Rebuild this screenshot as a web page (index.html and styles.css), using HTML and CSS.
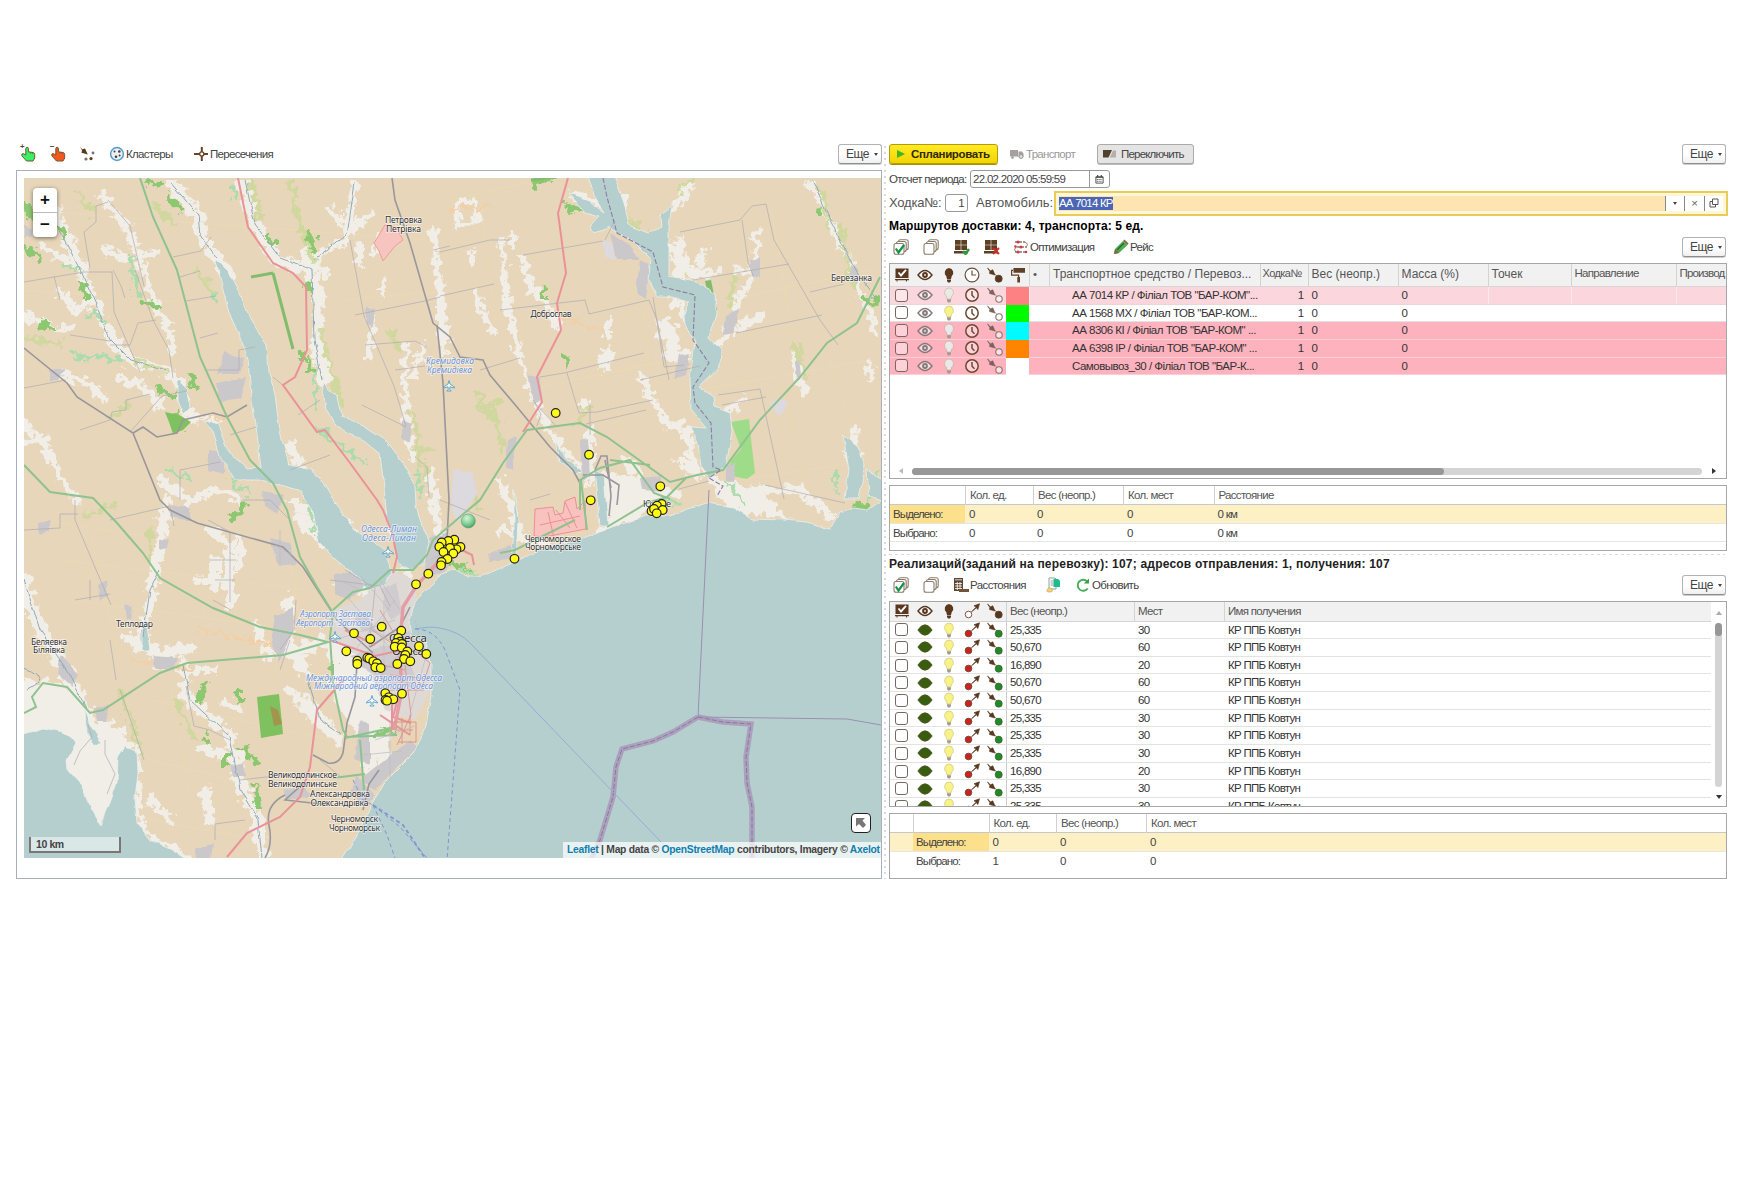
FILE: index.html
```html
<!DOCTYPE html>
<html lang="ru">
<head>
<meta charset="utf-8">
<title>Планирование маршрутов</title>
<link rel="stylesheet" href="styles.css">
</head>
<body>
<svg class="defs" width="0" height="0" aria-hidden="true">
  <symbol id="hand" viewBox="0 0 16 16"><path d="M5.800 8V2.600a1.300 1.300 0 0 1 2.600 0V5.800l4.600.7q1.700.4 1.700 2V12l-1.700 3H6.500L1.800 9.800Q1.300 7.400 3.300 7.600L5.800 9z" fill="currentColor" stroke="#6d5a30" stroke-width="1"/><path d="M10.300 6.200v1.500M12.300 6.600v1.500" stroke="#6d5a30" stroke-width=".7"/></symbol>
  <symbol id="plan-to" viewBox="0 0 16 16"><path d="M1 .5l2.200 2.700L6 2.500 8.800 8.500 2.500 6.800 3 4.200z" fill="#5b3a1c"/><circle cx="7" cy="13" r="1.600" fill="#7c6f64"/><circle cx="14" cy="7" r="1.400" fill="#7c6f64"/><circle cx="12" cy="12.600" r="1.600" fill="#5b3a1c"/></symbol>
  <symbol id="cluster" viewBox="0 0 16 16"><circle cx="8" cy="8" r="6.400" fill="#e4f1fa" stroke="#5c9ac6" stroke-width="1.500"/><g fill="#5b3a1c"><circle cx="5.500" cy="5.500" r="1"/><circle cx="10.300" cy="5.500" r="1.300"/><circle cx="10.600" cy="9.500" r="1"/><circle cx="7" cy="10.800" r="1.300"/></g></symbol>
  <symbol id="cross" viewBox="0 0 16 16"><path d="M1 8h14M8.800 1v14" stroke="#6a4424" stroke-width="2"/><circle cx="8.800" cy="8" r="2.100" fill="#fff" stroke="#6a4424" stroke-width="1.300"/></symbol>
  <symbol id="pages" viewBox="0 0 16 16"><g fill="#fff" stroke="#8c7b6a" stroke-width="1.100"><rect x="5.500" y=".8" width="9.700" height="10" rx="2"/><rect x="3.500" y="2.500" width="9.700" height="10" rx="2"/><rect x="1" y="4.500" width="10" height="10.700" rx="2"/></g></symbol>
  <symbol id="pages-on" viewBox="0 0 16 16"><use href="#pages"/><path d="M2.800 9.500l2.700 4L11 6" fill="none" stroke="#159447" stroke-width="2.200"/></symbol>
  <symbol id="pallet" viewBox="0 0 16 16"><path d="M2 1h5.700v4.700H2zM8.300 1H14v4.700H8.300zM2 6.300h5.700V11H2zM8.300 6.300H14V11H8.300zM1 12h14v2.500H1z" fill="#5d3f25"/></symbol>
  <symbol id="optim" viewBox="0 0 16 16"><path d="M2 3h10M4 8h10M2 13h10" stroke="#8a7765" stroke-width="1.300" stroke-dasharray="3 1"/><path d="M12 3q4 2 1 5M3 8q-3 3 0 5" fill="none" stroke="#8a7765"/><g fill="#d03a4c"><circle cx="5" cy="3" r="1.600"/><circle cx="2.500" cy="7.500" r="1.300"/><circle cx="8" cy="8" r="1.500"/><circle cx="5" cy="13" r="1.500"/><circle cx="13" cy="13" r="1.300"/></g></symbol>
  <symbol id="pencil" viewBox="0 0 16 16"><path d="M1 15l1-5L10 2l4.500 4L6 14z" fill="#4cae50"/><path d="M10 2l1.500-1.500L15.500 4.500 14.500 6z" fill="#85684d"/><path d="M1 15l1-5 4 4z" fill="#8b6238"/><path d="M4 11l7-7" stroke="#246b32" stroke-width="1.300"/></symbol>
  <symbol id="h-check" viewBox="0 0 16 16"><path d="M1.500 1.500h13v9.500h-13zM1 12h14v1.200H1zM2.500 13h1v1.500h-1zM12 13h1v1.500h-1z" fill="#5a3820"/><path d="M4.500 5.500L7 8.500 12 2.800" stroke="#fff" fill="none" stroke-width="1.900"/></symbol>
  <symbol id="eye" viewBox="0 0 16 16"><path d="M1 8q7-9 14 0-7 9-14 0z" fill="#fff" fill-opacity=".5" stroke="currentColor" stroke-width="1.400"/><circle cx="8" cy="8" r="2.900" fill="currentColor"/><circle cx="8" cy="8" r=".9" fill="#eee"/></symbol>
  <symbol id="eye-full" viewBox="0 0 16 16"><path d="M.8 8q7.200-10.500 14.400 0-7.200 10.500-14.400 0z" fill="#32600f" stroke="#64491f" stroke-width=".8"/><circle cx="8" cy="8" r="1.300" fill="#5b4a18"/></symbol>
  <symbol id="bulb" viewBox="0 0 16 16"><path d="M8 1a4.600 4.600 0 0 1 2.600 8.300L10 12H6L5.400 9.300A4.600 4.600 0 0 1 8 1z" fill="currentColor" stroke="#8c8040" stroke-opacity=".4" stroke-width=".7"/><path d="M6 12.300h4v1.700l-1 1.500H7L6 14z" fill="#a39d90"/></symbol>
  <symbol id="bulb-dark" viewBox="0 0 16 16"><path d="M8 1a4.700 4.700 0 0 1 2.700 8.200L10 12H6L5.300 9.200A4.700 4.700 0 0 1 8 1zM6 12.400h4v1.500L9 15.500H7L6 13.900z" fill="#5a3820"/></symbol>
  <symbol id="clock" viewBox="0 0 16 16"><circle cx="8" cy="8" r="6.200" fill="#fff" fill-opacity=".4" stroke="#6e4a33" stroke-width="1.500"/><path d="M8 4V8.300l2.500 2.500" fill="none" stroke="#6e4a33" stroke-width="1.500"/></symbol>
  <symbol id="clock-h" viewBox="0 0 16 16"><circle cx="8" cy="8" r="6.900" fill="#fff" stroke="#6a4f3d" stroke-width="1.200"/><path d="M8 3.500V8h4" fill="none" stroke="#6a4f3d" stroke-width="1.200"/></symbol>
  <symbol id="arr-in" viewBox="0 0 16 16"><path d="M.5 1l3 2.800L5.800 2.800 8 8 2.500 6.500 2.800 4.500zM7.500 7l2.500 2" fill="#5a3820" stroke="#5a3820" stroke-width=".6"/><circle cx="11.700" cy="11.700" r="3.600" fill="currentColor" stroke="#58402e" stroke-width=".5"/></symbol>
  <symbol id="arr-in-o" viewBox="0 0 16 16"><path d="M.5 1l3 2.800L5.800 2.800 8 8 2.500 6.500 2.800 4.500zM7.500 7l2.500 2.500" fill="#77655c" stroke="#77655c" stroke-width=".6"/><circle cx="12" cy="12" r="3.200" fill="#fff" fill-opacity=".6" stroke="#87766c" stroke-width="1.100"/></symbol>
  <symbol id="arr-out" viewBox="0 0 16 16"><path d="M15.500.8L10 2.800l2.200 1.300-4.700 4.700 4.900-4L13.800 6.500z" fill="#5a3820" stroke="#5a3820" stroke-width=".7"/><circle cx="4.500" cy="11.500" r="3.300" fill="currentColor" stroke="#6b4634" stroke-width=".9"/></symbol>
  <symbol id="roller" viewBox="0 0 16 16"><path d="M3.500 1H15v4.700H3.500zM1 2.800h2.500V4H2.200v3.500h7V10H10v5.500H7.300V10H8V8.700H1z" fill="#5d4027"/></symbol>
  <symbol id="calc" viewBox="0 0 16 16"><path d="M1 1h9v13H1z" fill="#5f4631"/><path d="M2 2.800h7M2 6.500h7M2 9h7M2 11.500h7M4.300 5v8M7 5v8" stroke="#fff" stroke-width=".8"/><path d="M6 12h10v3H6z" fill="#6f543a"/></symbol>
  <symbol id="docs" viewBox="0 0 16 16"><path d="M4 1h6l1 1v10H4z" fill="#fff" stroke="#8fa39a"/><path d="M5.500 4h3M5.500 6h3M5.500 8h3" stroke="#888" stroke-width=".8"/><path d="M8.500 2H13l2 2V10H8.500z" fill="#1dbb8d"/><path d="M2 13q1-3 3.500-2 2 .2 2 2.500 0 1.500-2 1.500H3q-2-.5-1-2z" fill="#f2d276" stroke="#c2a35a" stroke-width=".6"/></symbol>
  <symbol id="reload" viewBox="0 0 16 16"><path d="M12.700 11.500A5.500 5.500 0 1 1 12 4.300" fill="none" stroke="#45ad58" stroke-width="1.900"/><path d="M14 1.500V6.500H8.800z" fill="#35a04a"/></symbol>
  <symbol id="truck" viewBox="0 0 16 16"><path d="M1 4h8v6.500H1zM9.500 5.500H13l1.500 2V11h-5z" fill="#a3a09d"/><circle cx="3.500" cy="11.500" r="1.300" fill="#999"/><circle cx="12" cy="10.500" r="2" fill="#ddd" stroke="#999"/></symbol>
  <symbol id="switch" viewBox="0 0 16 16"><path d="M1 4h9L6.500 11.500H1z" fill="#53402f"/><path d="M11 4.500h3v7H7.800z" fill="#b7afa7"/></symbol>
</svg>
<main class="app">
  <section class="left">
    <div class="bar">
      <div class="hand-box g"><svg class="i"><use href="#hand"/></svg><b>+</b></div>
      <div class="hand-box r"><svg class="i"><use href="#hand"/></svg><b>−</b></div>
      <svg class="i dots"><use href="#plan-to"/></svg>
      <svg class="i cl"><use href="#cluster"/></svg><span class="t t-clusters">Кластеры</span>
      <svg class="i cr"><use href="#cross"/></svg><span class="t t-cross">Пересечения</span>
      <button class="more">Еще<i></i></button>
    </div>
    <div class="map-frame">
      <div class="map">
        <svg class="canvas" viewBox="24 178 857 680" preserveAspectRatio="none">
          <defs>
            <filter id="rough" x="0" y="0" width="100%" height="100%" filterUnits="objectBoundingBox"><feTurbulence type="fractalNoise" baseFrequency=".12" numOctaves="3" seed="4"/><feDisplacementMap in="SourceGraphic" scale="17" xChannelSelector="R" yChannelSelector="G"/></filter>
            <filter id="wavy" x="0" y="0" width="100%" height="100%"><feTurbulence type="fractalNoise" baseFrequency=".08" numOctaves="2" seed="9"/><feDisplacementMap in="SourceGraphic" scale="5" xChannelSelector="R" yChannelSelector="G"/></filter>
            <radialGradient id="ball" cx=".4" cy=".3" r=".7"><stop offset="0" stop-color="#d3f6d6"/><stop offset=".6" stop-color="#84cf98"/><stop offset="1" stop-color="#4ba368"/></radialGradient>
            <path id="plane" d="M0-5.500L1-2 5.500 1v1L1 .8.700 3.500 2.200 5H-2.200L-.7 3.500-1 .8-5.500 2V1L-1-2z" fill="#fff" fill-opacity=".7" stroke="#52a3c8" stroke-width=".9"/>
          </defs>
          <rect x="24" y="178" width="857" height="680" fill="#e7d6ba"/>
          <g fill="none" stroke="#eddab2" stroke-width=".8" opacity=".8"><path d="M24 210l400 30M24 290l180 14M340 300l120-10M450 200l130-30M700 390l170-30M60 560l250 30M70 600l230 30M150 700l180 40M150 760l170 40M480 400l190-40M730 300l140-30M740 480l130-20M150 820l100 18M45 520l100 16"/><path d="M180 190l30 70M290 190l30 60M380 300l20 100M480 200l16 120M640 280l10 90M770 200l30 180M830 360l40 130M220 530l20 110M90 530l30 130M190 560l20 70M170 680l20 120M290 560l10 60M200 700l10 60M600 370l40 100M780 380l30 120" stroke="#ebdcae"/></g>
          <g filter="url(#rough)">
            <g fill="none" stroke="#f1eee8" stroke-linecap="round" stroke-linejoin="round" stroke-width="9">
              <path d="M50 200L67 237 83 277 97 307 110 337 130 360 167 370 182 387 187 415 215 420" stroke-width="10"/>
              <path d="M170 182L200 217 200 233 217 260 230 275M243 180L253 223 277 260 310 270 320 297 316 337 325 380" stroke-width="11"/>
              <path d="M355 182L350 215 347 237 313 260 325 275M330 210l16 14M370 215l-15 10M360 245v16M306 245v20M318 300v60" stroke-width="8"/>
              <path d="M103 195l5 12 20 18 4 22M135 240L140 263 152 297 170 330 173 352M105 250l20 10 30-8M60 290L75 312 88 300" stroke-width="7"/>
              <path d="M24 315l30 14 20-2M40 245L60 258 83 265M24 423L43 443 60 477 77 500M24 443l24-5M60 375l30 10 16 14M118 378l24 8 16 16 4 8" stroke-width="7"/>
              <path d="M407 345L404 375 407 423 413 457M425 345l-12 30M433 230L440 297 446 340M378 235v20M372 315v30l-6 12M383 280v14" stroke-width="6"/>
              <path d="M456 205l18-5 4 20-20 6zM512 238v6M472 252v10M440 285v40l5 30M475 290l8 22 10 20M502 240L507 303 520 357 537 403 553 437 580 470" stroke-width="6"/>
              <path d="M523 257L530 285 550 310 556 325M608 322v14M605 355v12M585 400v6M590 430v50M640 377L667 423 687 430 697 477M573 195l30 10M610 190l16 12" stroke-width="8"/>
              <path d="M810 180L827 217 850 263 867 307 878 335M757 230L753 277M735 270h18M700 265l4-16M753 277L738 300 730 323 718 345M762 315l-25 15M795 355L800 385 806 390M870 365v14M744 400l-20 12M855 430v20M675 275l40-3" stroke-width="7"/>
              <path d="M680 240v30M670 245l20 26M675 210l14-25M660 330l12-2v20M667 355h20M673 300l20 20M680 460l10 10M740 490h60l30 25M600 530l50-25M625 460l20 20 20 22" stroke-width="9"/>
              <path d="M167 500L163 530 153 583 143 637 160 663M183 663L187 697 230 737 240 783 257 817 263 858M210 530l20 14v60M200 580h30M215 560v30" stroke-width="10"/>
              <path d="M24 580L30 610 67 673 90 723 120 735M130 640l30 15 30-6M290 600l-6 40 20 30M300 520l40 30 20 16M300 650l20-8M300 700l30 30M350 700l30 20 4 40M370 730v40M340 580l50 20" stroke-width="13"/>
              <path d="M160 480l30 20 30-10 20 10M195 670h20M225 700l12 10M255 625l15 30M200 750l40 6M290 690l36 40 14 10M390 520l20 60M320 500l50 50M240 540v24M430 470l10 70M500 480l20 50M205 790l4 30M150 800l20 20M500 530l60 20M290 445l10 20" stroke-width="8"/>
              <path d="M137 750L139 800 140 825 155 842 190 858" stroke-width="6"/>
            </g>
            <g fill="#f1eee8"><path d="M24 680l36 3 30 30 40 28 10 30-30 60-20 8-40-80-56-14zM280 500h50l20 30-30-5zM325 640l80-30 20 80-60 60-30-50zM600 470l80 20-20 20-60 10zM700 470l60 20 30 30-60-8zM100 200l10-6 4 16zM600 350l12-2v18l-16 4zM655 322l16-4 6 20-18 4zM840 450l20 4-6 16z"/></g>
          </g>
          <g filter="url(#rough)" fill="none" stroke-linecap="round">
            <path d="M250 180l12 40M290 180l14 60M305 230l8 30M320 330l12 50 6 30M75 192l18 20M155 205l18 20M195 270l20 24M115 505l-30 10M150 530v30M135 360l30 12M425 480l-12-70M415 450l16 0M475 390l20 30 8 30M630 220l18 18M680 190l16-14M822 190l8 40M840 225l12 60M60 345l-36-8M130 405l-20 14M735 275l-4 30M795 345l10 30M590 405l-14 20M470 485l10 25M120 690l20 60M175 700l20 40M500 400l-20 10M335 380l6 24M390 330l10 20" stroke="#ccd89a" stroke-width="5" opacity=".85"/>
            <path d="M150 180l8 6M168 195l14 16M24 245l16 14M24 205l10 14M82 285l4 12M40 323l12 6M270 237l4 8M309 230l4 20M306 282l5 8M303 350v8M190 375l4 12M60 228l6 8M160 390l14 6M176 415l2 12M145 303l14 4M565 205l14 6M533 185l18-8M545 290v10M566 355v8M310 360v10M820 212v1M865 300l14 2M245 505l-14 14M205 685l-6 14M240 690v12M206 735l3 10M243 750l14 12M225 755v10M255 785l4 24M333 665v10M380 735l10-4M440 558l30 14M858 506l10 2M405 755l6-6" stroke="#8cc870" stroke-width="6"/>
            <path d="M70 355l50 4M130 255l8 40M320 430l20 16 24 16M416 475l4 20M235 185v14M215 295v8M315 370v40M230 480l20 14M170 470l20 10M660 500l20 4M880 470l-10 30M835 470v20M90 315l16 4M65 265l16 8M465 570l14 10M725 480l20 24M305 490l10 40" stroke="#acdcae" stroke-width="4"/>
            <path d="M200 630l70 14M130 660l60 8M450 210l40-4M560 320l40 10M410 700l4 50M400 690l12 30M422 660v40M200 420l30-6" stroke="#f1cfa7" stroke-width="3"/>
          </g>
          <path d="M251 277l22-4M273 273l20 76M531 180l26-3" stroke="#82bd6d" stroke-width="3" fill="none"/>
          <path d="M705 281l6-1 6 30-5 3z" fill="#82bd6d"/>
          <path d="M165 412l14 3 12 7-8 8-10 4-4-12zM257 697l22-3 4 40-22 4z" fill="#7fc15f"/>
          <path d="M731 422l18-3 2 20 4 34-8 6-20-4 4-14 10-12z" fill="#9fdc89"/><path d="M270 706l8 4 4 14-8 2z" fill="#a2964f"/>
          <g filter="url(#wavy)" fill="#cbc8cc">
            <path d="M330 610l30-10 30-30 25 10 0 40 20 20v40l-20 40-30-10-20-50-30-20z" fill="#dfd9d6"/>
            <path d="M350 655l40-10 20 14 8 30-30-6-24-14zM392 636l20-6 14 20-20 10zM352 612l16 2 8 20-14-4zM380 590l16-8 6 30-12 8z" fill="#d0cbce"/>
            <path d="M427 540l20-8 10 20-14 20-20 6zM335 574l20-4 12 14-18 16-14-6zM270 538l20 4 6 22-18 2zM262 492l22 4-6 18-14-8zM225 352l18 6-4 16-22 0zM216 384l30-6-6 20-20 4zM208 450l16 2v22l-16-4zM172 505l18 4v12l-20-4zM610 233l20 12 10 14-24 0zM640 260l10 4-4 34-10-6zM680 355l10-2-4 22-12 4zM527 375l12 2 4 22-10 4zM507 440l10-4-4 34-8-4zM750 260l10-2v20l-8-2zM725 315l14-6-6 24-10 2zM402 420l10 4-2 18-8-4zM365 307l10 2-2 18-6-2zM98 585l8-4 2 16-8 4zM125 605l8 2-2 14-4-2zM140 630l8-2v18l-6 0zM152 655l26 2-4 12-18 0zM60 655l18 20-6 12-14-12zM95 708l14-4-4 18-8 0zM230 765l14-2 2 14-12 0zM195 848l18-4-2 14h-14zM283 790l20-4 10 10-26 4zM355 775l20 20-10 12-14-12zM360 720l10 4v40l-16-6zM488 553l26-8-4 14-20 2zM580 440l8-2 2 40-8 2zM640 478l22-2v16l-20-2zM726 465l10-2-2 20-8-2zM850 265l8 4v14l-8-2zM795 362l4-2 2 16-4 2zM24 225l8 4v8h-8zM50 370l14-2-6 12-8 0zM38 522l12-2v12l-10 4zM159 540l10-2-2 10-8 2zM360 780l50-40 8 8-44 42zM275 615l18-6v24l-14 30-8-20z"/>
            <path d="M453 470l20 4 4 20-20 30-6-20zM770 405l10-8 8 8-10 10zM600 240l12 4 4 16-10-4z" fill="#dcd9df"/>
          </g>
          <path d="M385 225l12 3 6 12-8 6-12 15-4-10-5-8z" fill="#f7c5c0" stroke="#ef9c9b"/>
          <path d="M535 509l18-2 2 8 8-2 2-12 10-4 2 12 8-8 1 28-42 8-10-1z" fill="#f8c2bf" stroke="#ef8f90"/>
          <path d="M548 512l6 26M556 510l14 18M540 525l40-9M565 502l12 26" stroke="#ef8f90" fill="none"/>
          <g fill="#b5cfcf" stroke="#edf0ea" stroke-width=".8">
            <g filter="url(#wavy)">
            <path d="M217 260l12 12 11 20 10 27 17 26 2 27 6 23 5 37 9 33 23 5 15 19 12 21 16 20 30 20 6 22-6 13-16 5-14-15-20-16-16-17-6-30-14-22-37-10-27 0-15-25-7-23-9-14 14 7 10 27 20 17 13-1-5-43-5-30-3-36-10-27-10-23-7-27-5-20z"/>
            <path d="M322 382l15 15 4 18 24 12 20 13 17 22 13 23 1 20 6 20 8 18-6 20-12 8-14-8-6-22-5-23-3-30-4-34-17-14-26-13-11-17z"/>
            <path d="M588 176h26l10 27 5 22 20 8 13-5-1-13 11-12-3 24v50l27 5 19 11 1 20-7 24 12 13-1 17-21 20 15 10 1 10 15 6 2 17-6 37-16 11-9-11-3-24-7-16 15 1-15-18-1-33 5-34-12-23 6-17-12-6h-20l-9-17 3-20-20-20-13-7-8-6-15 6-5-6 9-10-14-4-16-20 15 5 21 15-10-16z"/>
            <path d="M178 380l8 8 4 20-6 6-6-14zM843 435l14 10 8 20-6 34h-14l4-30zM594 470l10 4 4 52h-8zM514 490l4 30-2 45h-6l4-30zM867 470l16 10v20l-14-4zM85 708l6 18 10 16-6 4-9-14zM556 440l10 20 16 10-6 4-16-12zM146 620l4 30h-8l0-20z"/>
            <path d="M885 498l-17 12-15-2-13 4-10 17-23-7-24-2-31-1-19-12-26-4-20 6-17 7-23 0-34 11-30 11-43 11-25 13-35 15h-10l-17-8-12 4-7 10-18 16-7 24 2 13 15 5 5 22v33l-5 30-12 27-18 18-13 13-7 12-10 20-8 17-9 16-14 22h554z"/>
            <path d="M20 735l23-7 20 4 14 11-10 17 1 10 12 13 10 24 10 18 10-22 7-20 1-26 7-10 12 6 1 20-3 24 2 26 13 17 23 10 18 12H20z"/>
            </g>
          </g>
          <g fill="none" stroke="#8fa9b7" stroke-width="1" filter="url(#wavy)"><path d="M60 230L80 270 97 307 110 340 130 360 165 370M170 182L198 215 200 235 217 258M245 180L255 225 280 258 312 270 314 340 322 380M355 182L347 235 313 260M183 665L190 700 230 737 240 790 258 820 262 858M24 580L40 630 70 675 88 710M24 668q20 6 14 14t-12 8M812 180L830 220 855 270 878 300M143 637L150 590 160 570M308 680L320 720 342 735"/></g>
          <g fill="none" stroke="#aeacb2" stroke-width=".7">
            <path d="M24 282l60-10 28 0 2 40 26 60M24 388l42-8M135 270l18 50 16 30 4 28M90 268l-6-36 12-10 0-16 12-4M108 200l22 26 14 60M80 430l30-10 2-8 14-2 0-10 24-6M130 432l32-36 25-5M173 257l28-6 10-14M180 277l20-6M186 301l30-5M110 345l20 0 8-22 18-3M70 335l40 6M113 270l8 16 4 12M60 300l-6-24"/>
            <path d="M350 240l14 76 30 70 12 40M355 315l70-14 15-4M365 345l50-4 12 6M395 370l30-4M415 457l12 10 2 30M273 377l12 10M320 400l-22 15M290 470l40-15M230 435l26-8M205 370l34 0 0-20 16-3M200 338l18-5M433 250l17-4M362 405l44 22M180 500v-30l40-8"/>
            <path d="M440 252l50-12M490 240l20 0M440 296l54-12M500 310l85-10 4 14 60-14 8 20 12 60M523 255l80-14M605 240l10-20M680 232l60-12 12-14 14-2 8 36 46 80 18 25M742 220l6 42 6 16M693 280l96-16M736 333l86-18M810 292l34-8M540 377l24-4 80-20M567 373l12 40 18-1 56-12M590 405l0 30M555 425l-20-22M646 410l-60 14M640 380l60-14M718 395l42-6 24 110M722 405l44-8M653 297l8 50 3 20 20-2M480 370l40-12M533 400l8 14-4 12M530 500l20-6M440 500l50 20M765 485l80 18M709 481l-30 8"/>
            <path d="M75 500l0 20 36 85M24 530l36-2 0-14 18 0M110 520l60-14 4 20M75 600l35-6M208 520l22 12v70M215 580h20M210 560h26M213 600l18 10M240 500l30 0 20 20M90 580l0 20M120 690l14 40 10 30M88 725l4 12-12 14-6 14M105 740l0 14 10 20-8 20M110 640l6 40M230 740l-20-10-16-4-8-40M240 780l70-8M215 840l0-16 30-4M296 600l-2 30-14 20M330 580l50 6 10 20M290 640l-10 30M320 760l20 16M345 570l30 18-6 60"/>
          </g>
          <g fill="none" stroke="#98979b" stroke-width="1.600">
            <path d="M392 178l3 22 15 43 23 80 17 14 10 20 23 3 7 15 27 32 33 40 23 23 7 13M437 325l6 58 6 117-2 40M24 348l43 35 10 14 56 36 27 67 10 10 27 13 86 24 20 20 34 53 36 33M133 433l10-6 14 10 20-4 6-13 30-7 14 4 20-12M357 663l-2 34-8 26-4 30q-4 12-15 10l-15-8M330 805l-45-5 20-18M285 795q-20 10-16 30t-4 33M595 470l6-14 6 0 4 40-2 20M605 460l6 28M583 475h20l16 10-2 20M410 607l-10 20-30 20M363 810l6-26 10-14"/>
          </g>
          <g fill="none" stroke="#8ec28f" stroke-width="2">
            <path d="M140 178l13 39 24 53 23 87 27 60 23 43 23 23 14 27 13 47 17 30 16 26-3 24 3 46 10 47 4 7 50-2M24 465l26 27 43 6 24 25 26 30 17 25 53 30 47 19 40 8 28 7-45 13-96 8-27 10-57 37-13 3-23-26-24-4-11 14 4 10-12 6M333 610l20-18 17-4 20-18h23l14-15 6-15 35-30 12-10 23-37 24-33 53-7 27 14 63 45 27-7 26-5 37-50 40-43 27-34 30-20 23-46M580 510v-30l20-12 30-8 24 33 16 6M607 527l40-24 20-6 20-20M581 480l6 50M360 740l4 50M333 778l32-4M345 738l46-10M500 553l15-3 60-30M610 460l40 5"/>
          </g>
          <g fill="none" stroke="#ea9299" stroke-width="2">
            <path d="M238 178l10 49 25 36 20 10 13 14 1 63-12 27-12 8 34 47 8-2 25 33 27 37 6 10 9 23 5 24-4 16M568 178l-10 35 8 60-9 30 4 27-24 47 5 25-19 30M343 680l-26 30-7 57-10 30-20 20-33 16-20 24M330 640l45 16 27-6M345 630l30 15M400 690l-7 27 18 6M380 715l30 20M392 700v30M452 545l20 10 2 10"/>
            <path d="M440 560l-23 25-14 22-2 23-1 30 2 30-8 40" stroke-width="3.500" stroke="#e49da4"/>
          </g>
          <g fill="none" stroke="#d9918d" stroke-width=".9"><path d="M395 655l20-4 15 12-8 24M405 665l6 50-14 30M390 675l40 4M388 690l36 0M390 722l26 0 0 20-18 0M395 730h18M402 718v26M410 715v20M372 630l30 20M360 660l45 10M380 610l18 30"/></g>
          <g fill="none" stroke="#bdbcc0" stroke-width=".7"><path d="M335 640l60-20M345 610l60 40M350 600l50 60M380 580l20 30M370 690l40-50M415 620l10 40-14 50M395 600l-40 50M384 600v70M360 575l30 36M275 545l20 12M280 530v34M340 580l20 10M438 545l14 20M430 560l24-12M390 720v60M375 740l40-14M362 755l40-4"/></g>
          <g fill="none" stroke="#8c7da0" stroke-width="1.100" stroke-dasharray="5 2"><path d="M603 178l4 19 10 36 36 19 10 35 32 8-2 45 16 23-16 24 2 16 16 20 2 44 8 3-12 8 14 8-6 10"/></g>
          <path d="M709 490l-11 227M698 717l149 2 34 6" fill="none" stroke="#9b8fb1" stroke-width="1"/>
          <path d="M698 717l-25 15-20 9-31 8-6 18-3 30-13 43-9 20M698 717l25 5 28 2-5 33 1 26 5 24v52" fill="none" stroke="#a892b7" stroke-width="5.500" opacity=".75"/>
          <path d="M698 717l-25 15-20 9-31 8-6 18-3 30-13 43-9 20M698 717l25 5 28 2-5 33 1 26 5 24v52" fill="none" stroke="#8879a0" stroke-width="1" stroke-dasharray="5 2"/>
          <path d="M415 629q16-3 25-1 20 4 30 15l143 149 50 52" fill="none" stroke="#93add5"/>
          <g fill="none" stroke="#8094cf" stroke-dasharray="4 3"><path d="M415 629q20 0 30 21l15 40-13 170M353 780l10 20 10 5 27 22 27 31M373 805l14 30 8 23"/><path d="M373 805l30 20 22 33" stroke-width="1.800"/></g>
          <use href="#plane" x="449" y="386"/><use href="#plane" x="388" y="552"/><use href="#plane" x="335" y="637"/><use href="#plane" x="372" y="701"/>
          <g class="lbl">
            <text x="385" y="223" textLength="37">Петровка</text><text x="386" y="232" textLength="35">Петрівка</text>
            <text x="831" y="280.500" textLength="41">Березанка</text><text x="530.500" y="317" textLength="41">Доброслав</text>
            <text x="525" y="541.500" textLength="56">Черноморское</text><text x="525" y="550" textLength="56">Чорноморське</text>
            <text x="643" y="506.500" textLength="28">Южное</text>
            <text x="116" y="627" textLength="37">Теплодар</text><text x="31" y="644.500" textLength="36">Беляевка</text><text x="33" y="653" textLength="32">Біляївка</text>
            <text x="268" y="778" textLength="69">Великодолинское</text><text x="268" y="786.500" textLength="69">Великодолинське</text>
            <text x="310" y="797" textLength="60">Александровка</text><text x="310.500" y="805.500" textLength="58">Олександрівка</text>
            <text x="331" y="822" textLength="47">Черноморск</text><text x="329" y="830.500" textLength="51">Чорноморськ</text>
          </g>
          <g class="lbl air">
            <text x="426" y="364" textLength="48">Кремидовка</text><text x="427" y="372.500" textLength="45">Кремидівка</text>
            <text x="361" y="532" textLength="56">Одесса-Лиман</text><text x="362" y="540.500" textLength="54">Одеса-Лиман</text>
            <text x="300" y="617" textLength="71">Аэропорт Застава</text><text x="296" y="625.500" textLength="77">Аеропорт "Застава"</text>
            <text x="306" y="680.500" textLength="136">Международный аэропорт Одесса</text><text x="314" y="689" textLength="119">Міжнародний аеропорт Одеса</text>
          </g>
          <text class="city" x="389" y="642" textLength="38">Одесса</text><text class="city" x="392" y="655" textLength="32">Одеса</text>
          <g fill="#fffb14" stroke="#222" stroke-width="1.200">
            <circle cx="555.700" cy="413" r="4.300"/><circle cx="589" cy="454.700" r="4.300"/><circle cx="660.300" cy="486.300" r="4.300"/><circle cx="590.700" cy="500.300" r="4.300"/>
            <circle cx="661.700" cy="504" r="4.300"/><circle cx="657" cy="505.700" r="4.300"/><circle cx="651.500" cy="511" r="4.300"/><circle cx="654" cy="509" r="4.300"/><circle cx="662.700" cy="510" r="4.300"/><circle cx="656.700" cy="513.300" r="4.300"/><circle cx="514.500" cy="558.800" r="4.300"/>
            <circle cx="454.300" cy="539.700" r="4.300"/><circle cx="448.300" cy="541" r="4.300"/><circle cx="441.700" cy="542.500" r="4.300"/><circle cx="439.300" cy="546.700" r="4.300"/><circle cx="460.500" cy="547" r="4.300"/><circle cx="456.500" cy="549.300" r="4.300"/><circle cx="450" cy="548" r="4.300"/><circle cx="453.300" cy="553.500" r="4.300"/><circle cx="443.500" cy="552" r="4.300"/><circle cx="447.500" cy="559" r="4.300"/><circle cx="441.500" cy="562" r="4.300"/><circle cx="441" cy="565.300" r="4.300"/><circle cx="428.300" cy="573.700" r="4.300"/><circle cx="416" cy="584.300" r="4.300"/>
            <circle cx="381.700" cy="626.700" r="4.300"/><circle cx="354" cy="633.300" r="4.300"/><circle cx="370.300" cy="639" r="4.300"/><circle cx="401.300" cy="630.700" r="4.300"/><circle cx="346.300" cy="651.300" r="4.300"/><circle cx="357.300" cy="660.700" r="4.300"/><circle cx="357.300" cy="664" r="4.300"/><circle cx="367.300" cy="657.700" r="4.300"/><circle cx="369.300" cy="658.500" r="4.300"/><circle cx="373.300" cy="661.300" r="4.300"/><circle cx="377" cy="663.500" r="4.300"/><circle cx="375.300" cy="667.300" r="4.300"/><circle cx="380.700" cy="668" r="4.300"/>
            <circle cx="398.300" cy="638" r="4.300"/><circle cx="400" cy="641.700" r="4.300"/><circle cx="396" cy="643" r="4.300"/><circle cx="402" cy="644" r="4.300"/><circle cx="394.700" cy="646.700" r="4.300"/><circle cx="401.700" cy="647.500" r="4.300"/><circle cx="407.300" cy="651.500" r="4.300"/><circle cx="405.300" cy="655" r="4.300"/><circle cx="404" cy="659" r="4.300"/><circle cx="397.300" cy="664" r="4.300"/><circle cx="410.300" cy="661.300" r="4.300"/><circle cx="419" cy="646.300" r="4.300"/><circle cx="426.300" cy="654" r="4.300"/>
            <circle cx="385.300" cy="693.300" r="4.300"/><circle cx="402" cy="693.700" r="4.300"/><circle cx="388.700" cy="697.300" r="4.300"/><circle cx="393.300" cy="699.300" r="4.300"/><circle cx="385.500" cy="700" r="4.300"/><circle cx="387" cy="700.700" r="4.300"/>
          </g>
          <circle cx="468.300" cy="521" r="7" fill="url(#ball)" stroke="#5b9f75" stroke-width=".6"/>
        </svg>
        <div class="zoom"><span>+</span><span>−</span></div>
        <div class="scale">10 km</div>
        <div class="full"><svg viewBox="0 0 12 12" width="12" height="12"><path d="M1 1h9L7.500 3.500 11 8 8 11 4 7 1 9.500z" fill="#777"/></svg></div>
        <div class="attr"><a>Leaflet</a> | Map data © <a>OpenStreetMap</a> contributors, Imagery © <a>Axelot</a></div>
      </div>
    </div>
  </section>
  <div class="vsplit"></div>
  <section class="right">
    <div class="bar rbar">
      <button class="go"><i></i><span class="t-go">Спланировать</span></button>
      <svg class="i tr"><use href="#truck"/></svg><span class="t t-tr">Транспорт</span>
      <button class="sw"><svg class="i"><use href="#switch"/></svg><span class="t t-sw">Переключить</span></button>
      <button class="more">Еще<i></i></button>
    </div>
    <div class="period"><span class="t t-per">Отсчет периода:</span><div class="inp date"><span class="t t-date">22.02.2020 05:59:59</span><div class="cal"><svg viewBox="0 0 10 10" width="9" height="9"><path d="M1 2h8v7H1z" fill="#fff" stroke="#444"/><path d="M1 2.500h8M3 0v2M7 0v2" stroke="#444" stroke-width="1.300"/><path d="M2 5h6M2 7h6" stroke="#444" stroke-dasharray="1.200 .8"/></svg></div></div></div>
    <div class="car"><span class="big t-trip">Ходка№:</span><div class="inp num">1</div><span class="big t-car">Автомобиль:</span>
      <div class="combo"><div class="fill"><span class="sel">АА 7014 КР</span></div><div class="cb"><i class="dn"></i></div><div class="cb x">×</div><div class="cb"><svg viewBox="0 0 10 10" width="10" height="10"><path d="M3.500 1h5.500v5.500H3.500zM3.500 3.500H1V9h5.500V6.500" fill="none" stroke="#555"/></svg></div></div>
    </div>
    <h2 class="h1t"><span>Маршрутов доставки: 4, транспорта: 5 ед.</span></h2>
    <div class="tools">
      <svg class="i"><use href="#pages-on"/></svg><svg class="i"><use href="#pages"/></svg>
      <div class="pal"><svg class="i"><use href="#pallet"/></svg><svg class="bd" viewBox="0 0 8 8"><path d="M1 4l2.500 3L7 2" fill="none" stroke="#2f9b3b" stroke-width="2.500"/></svg></div>
      <div class="pal"><svg class="i"><use href="#pallet"/></svg><svg class="bd" viewBox="0 0 8 8"><path d="M1 1l6 6M7 1L1 7" stroke="#cc2f2a" stroke-width="2"/></svg></div>
      <svg class="i op"><use href="#optim"/></svg><span class="t t-opt">Оптимизация</span>
      <svg class="i pn"><use href="#pencil"/></svg><span class="t t-trip2">Рейс</span>
      <button class="more">Еще<i></i></button>
    </div>
    <div class="grid g1">
      <div class="hd r1"><svg class="i"><use href="#h-check"/></svg><svg class="i brown"><use href="#eye"/></svg><svg class="i"><use href="#bulb-dark"/></svg><svg class="i"><use href="#clock-h"/></svg><svg class="i brown"><use href="#arr-in"/></svg><svg class="i"><use href="#roller"/></svg><span class="dot">•</span><span class="hb w1">Транспортное средство / Перевоз...</span><span class="hs w2">Ходка№</span><span class="hb w3">Вес (неопр.)</span><span class="hb w4">Масса (%)</span><span class="hb w5">Точек</span><span class="hs w6">Направление</span><span class="hs w7">Производ</span></div>
      <div class="row r1 pale"><b class="ck"></b><svg class="i grey"><use href="#eye"/></svg><svg class="i off"><use href="#bulb"/></svg><svg class="i"><use href="#clock"/></svg><svg class="i"><use href="#arr-in-o"/></svg><u class="c1"></u><s></s><span class="nm n1">АА 7014 КР / Філіал ТОВ "БАР-КОМ"...</span><span class="rt">1</span><span>0</span><span>0</span><s></s><s></s><s></s></div>
      <div class="row r1"><b class="ck"></b><svg class="i grey"><use href="#eye"/></svg><svg class="i on"><use href="#bulb"/></svg><svg class="i"><use href="#clock"/></svg><svg class="i"><use href="#arr-in-o"/></svg><u class="c2"></u><s></s><span class="nm n2">АА 1568 МХ / Філіал ТОВ "БАР-КОМ...</span><span class="rt">1</span><span>0</span><span>0</span><s></s><s></s><s></s></div>
      <div class="row r1 pink"><b class="ck"></b><svg class="i grey"><use href="#eye"/></svg><svg class="i off"><use href="#bulb"/></svg><svg class="i"><use href="#clock"/></svg><svg class="i"><use href="#arr-in-o"/></svg><u class="c3"></u><s></s><span class="nm n3">АА 8306 КІ / Філіал ТОВ "БАР-КОМ" ...</span><span class="rt">1</span><span>0</span><span>0</span><s></s><s></s><s></s></div>
      <div class="row r1 pink"><b class="ck"></b><svg class="i grey"><use href="#eye"/></svg><svg class="i off"><use href="#bulb"/></svg><svg class="i"><use href="#clock"/></svg><svg class="i"><use href="#arr-in-o"/></svg><u class="c4"></u><s></s><span class="nm n4">АА 6398 ІР / Філіал ТОВ "БАР-КОМ" ...</span><span class="rt">1</span><span>0</span><span>0</span><s></s><s></s><s></s></div>
      <div class="row r1 pink"><b class="ck"></b><svg class="i grey"><use href="#eye"/></svg><svg class="i off"><use href="#bulb"/></svg><svg class="i"><use href="#clock"/></svg><svg class="i"><use href="#arr-in-o"/></svg><u class="c5"></u><s></s><span class="nm n5">Самовывоз_30 / Філіал ТОВ "БАР-К...</span><span class="rt">1</span><span>0</span><span>0</span><s></s><s></s><s></s></div>
      <div class="hscroll"><i class="la"></i><div class="track"><div class="thumb"></div></div><i class="ra"></i></div>
    </div>
    <div class="sum s1">
      <div class="sh"><span></span><span class="q1">Кол. ед.</span><span class="q2">Вес (неопр.)</span><span class="q3">Кол. мест</span><span class="q4">Расстояние</span></div>
      <div class="sr y"><span class="k">Выделено:</span><span>0</span><span>0</span><span>0</span><span>0 км</span></div>
      <div class="sr"><span class="kk">Выбрано:</span><span>0</span><span>0</span><span>0</span><span>0 км</span></div>
    </div>
    <div class="hsplit"></div>
    <h2 class="h2t"><span>Реализаций(заданий на перевозку): 107; адресов отправления: 1, получения: 107</span></h2>
    <div class="tools tools2">
      <svg class="i"><use href="#pages-on"/></svg><svg class="i"><use href="#pages"/></svg>
      <svg class="i"><use href="#calc"/></svg><span class="t t-dist">Расстояния</span>
      <svg class="i dc"><use href="#docs"/></svg>
      <svg class="i rl"><use href="#reload"/></svg><span class="t t-upd">Обновить</span>
      <button class="more">Еще<i></i></button>
    </div>
    <div class="grid g2">
      <div class="rows">
      <div class="hd r2"><svg class="i"><use href="#h-check"/></svg><svg class="i brown"><use href="#eye"/></svg><svg class="i"><use href="#bulb-dark"/></svg><svg class="i hollow"><use href="#arr-out"/></svg><svg class="i brown"><use href="#arr-in"/></svg><span class="q2">Вес (неопр.)</span><span class="q5">Мест</span><span class="q6">Имя получения</span></div>
      <div class="row r2"><b class="ck"></b><svg class="i"><use href="#eye-full"/></svg><svg class="i on"><use href="#bulb"/></svg><svg class="i red"><use href="#arr-out"/></svg><svg class="i green"><use href="#arr-in"/></svg><span>25,335</span><span>30</span><span class="kp">КР ППБ Ковтун</span></div>
      <div class="row r2"><b class="ck"></b><svg class="i"><use href="#eye-full"/></svg><svg class="i on"><use href="#bulb"/></svg><svg class="i red"><use href="#arr-out"/></svg><svg class="i green"><use href="#arr-in"/></svg><span>50,670</span><span>60</span><span class="kp">КР ППБ Ковтун</span></div>
      <div class="row r2"><b class="ck"></b><svg class="i"><use href="#eye-full"/></svg><svg class="i on"><use href="#bulb"/></svg><svg class="i red"><use href="#arr-out"/></svg><svg class="i green"><use href="#arr-in"/></svg><span>16,890</span><span>20</span><span class="kp">КР ППБ Ковтун</span></div>
      <div class="row r2"><b class="ck"></b><svg class="i"><use href="#eye-full"/></svg><svg class="i on"><use href="#bulb"/></svg><svg class="i red"><use href="#arr-out"/></svg><svg class="i green"><use href="#arr-in"/></svg><span>50,670</span><span>60</span><span class="kp">КР ППБ Ковтун</span></div>
      <div class="row r2"><b class="ck"></b><svg class="i"><use href="#eye-full"/></svg><svg class="i on"><use href="#bulb"/></svg><svg class="i red"><use href="#arr-out"/></svg><svg class="i green"><use href="#arr-in"/></svg><span>50,670</span><span>60</span><span class="kp">КР ППБ Ковтун</span></div>
      <div class="row r2"><b class="ck"></b><svg class="i"><use href="#eye-full"/></svg><svg class="i on"><use href="#bulb"/></svg><svg class="i red"><use href="#arr-out"/></svg><svg class="i green"><use href="#arr-in"/></svg><span>25,335</span><span>30</span><span class="kp">КР ППБ Ковтун</span></div>
      <div class="row r2"><b class="ck"></b><svg class="i"><use href="#eye-full"/></svg><svg class="i on"><use href="#bulb"/></svg><svg class="i red"><use href="#arr-out"/></svg><svg class="i green"><use href="#arr-in"/></svg><span>25,335</span><span>30</span><span class="kp">КР ППБ Ковтун</span></div>
      <div class="row r2"><b class="ck"></b><svg class="i"><use href="#eye-full"/></svg><svg class="i on"><use href="#bulb"/></svg><svg class="i red"><use href="#arr-out"/></svg><svg class="i green"><use href="#arr-in"/></svg><span>25,335</span><span>30</span><span class="kp">КР ППБ Ковтун</span></div>
      <div class="row r2"><b class="ck"></b><svg class="i"><use href="#eye-full"/></svg><svg class="i on"><use href="#bulb"/></svg><svg class="i red"><use href="#arr-out"/></svg><svg class="i green"><use href="#arr-in"/></svg><span>16,890</span><span>20</span><span class="kp">КР ППБ Ковтун</span></div>
      <div class="row r2"><b class="ck"></b><svg class="i"><use href="#eye-full"/></svg><svg class="i on"><use href="#bulb"/></svg><svg class="i red"><use href="#arr-out"/></svg><svg class="i green"><use href="#arr-in"/></svg><span>25,335</span><span>30</span><span class="kp">КР ППБ Ковтун</span></div>
      <div class="row r2"><b class="ck"></b><svg class="i"><use href="#eye-full"/></svg><svg class="i on"><use href="#bulb"/></svg><svg class="i red"><use href="#arr-out"/></svg><svg class="i green"><use href="#arr-in"/></svg><span>25,335</span><span>30</span><span class="kp">КР ППБ Ковтун</span></div>
      </div>
      <div class="vscroll"><i class="ua"></i><div class="vtrack"><div class="vthumb"></div></div><i class="da"></i></div>
    </div>
    <div class="sum s2">
      <div class="sh"><span></span><span></span><span class="q1">Кол. ед.</span><span class="q2">Вес (неопр.)</span><span class="q3">Кол. мест</span></div>
      <div class="sr y"><span></span><span class="k">Выделено:</span><span>0</span><span>0</span><span>0</span></div>
      <div class="sr"><span></span><span class="kk">Выбрано:</span><span>1</span><span>0</span><span>0</span></div>
    </div>
  </section>
</main>
</body>
</html>
```
FILE: styles.css
```css
* { box-sizing: border-box; }
body { margin: 0; background: #fff; color: #444; font: 11.5px/14px "Liberation Sans", Arial, sans-serif; letter-spacing: -.7px; width: 1745px; height: 1198px; overflow: hidden; }
.defs { display: block; }
button { font: inherit; color: inherit; letter-spacing: inherit; margin: 0; padding: 0; }
.t, .big, .hd span, .row span, .sum span, h2 span { white-space: nowrap; }
.app { display: flex; padding: 144px 0 0 16px; }
.left { width: 866px; }
.vsplit { width: 7px; height: 735px; background: radial-gradient(circle, #d8dade 1px, transparent 1.5px) 0 0 / 6px 6px; }
.right { width: 840px; display: flex; flex-direction: column; }
.i { width: 16px; height: 16px; flex: none; display: block; }
.bar { display: flex; align-items: center; height: 20px; }
.more { width: 44px; height: 20px; margin-left: auto; border: 1px solid #b2b2b2; border-bottom-color: #8e8e8e; border-radius: 3px; background: linear-gradient(#fff 50%, #f0f0f0); display: flex; align-items: center; justify-content: center; gap: 5px; font-size: 12px; letter-spacing: -.4px; padding-left: 4px; box-shadow: 0 1px 0 #ccc; }
.more i, .dn { border: 2.5px solid transparent; border-top: 3px solid #444; border-bottom: 0; }

/* Map toolbar */
.hand-box { position: relative; margin-left: 4px; }
.hand-box.g { color: #3cf063; }
.hand-box.r { color: #f4581e; margin-left: 14px; }
.hand-box b { position: absolute; left: 0; top: -4px; font: bold 8px/10px "Liberation Sans", sans-serif; color: #5c4630; }
.dots { margin-left: 13px; }
.cl { margin: 0 1px 0 14px; }
.t-clusters { width: 53px; letter-spacing: -.65px; }
.cr { margin: 0 1px 0 14px; }

/* Map */
.map-frame { height: 709px; margin-top: 6px; border: 1px solid #a9b0bb; padding: 7px 0 0 7px; }
.map { position: relative; width: 857px; height: 680px; overflow: hidden; letter-spacing: 0; }
.canvas { display: block; width: 857px; height: 680px; }
.lbl text { font: 8.6px "Noto Sans", sans-serif; fill: #333; stroke: #fff; stroke-opacity: .6; stroke-width: 1.6px; paint-order: stroke; }
.lbl.air text { font-style: italic; fill: #6c93d6; }
.city { font: 11.5px "Noto Sans", sans-serif; fill: #333; stroke: #fff; stroke-opacity: .4; stroke-width: 1.5px; paint-order: stroke; }
.zoom { position: absolute; left: 9px; top: 10px; width: 24px; height: 49px; border-radius: 4px; background: #fff; box-shadow: 0 1px 4px rgba(0,0,0,.5); display: flex; flex-direction: column; }
.zoom span { flex: 1; display: flex; align-items: center; justify-content: center; font-weight: bold; font-size: 17px; line-height: 20px; color: #111; }
.zoom span + span { border-top: 1px solid #bbb; }
.scale { position: absolute; left: 5px; top: 659px; width: 92px; height: 16px; border: 2px solid #777; border-top: 0; background: rgba(255,255,255,.5); padding-left: 5px; font-weight: bold; font-size: 10.5px; line-height: 14px; letter-spacing: -.4px; }
.full { position: absolute; left: 827px; top: 635px; width: 20px; height: 20px; border: 1.5px solid #222; border-radius: 4px; background: #fff; display: flex; align-items: center; justify-content: center; }
.attr { position: absolute; right: 0; bottom: 0; width: 318px; height: 16px; padding-left: 4px; background: rgba(255,255,255,.7); font-weight: bold; font-size: 10.3px; line-height: 16px; letter-spacing: -.25px; white-space: nowrap; }
.attr a { color: #0f7fae; }

/* Planning header */
.go { width: 109px; height: 20px; border: 1px solid #b39b00; border-radius: 3px; background: linear-gradient(#ffea28, #f3d400); box-shadow: 0 1px 0 #a89200; font-weight: bold; letter-spacing: -.35px; color: #2e2900; display: flex; align-items: center; padding-left: 7px; gap: 6px; white-space: nowrap; }
.go i { border: 4.5px solid transparent; border-left: 8px solid #45b520; border-right: 0; }
.tr { margin: 0 1px 0 11px; }
.t-tr { color: #999; width: 50px; }
.sw { width: 97px; height: 20px; margin-left: 21px; border: 1px solid #aaa; border-radius: 3px; background: #e4e4e4; display: flex; align-items: center; padding-left: 4px; gap: 3px; box-shadow: 0 1px 0 #bbb; }
.t-sw { letter-spacing: -.8px; }
.right .more { margin-right: 3px; }
.period { height: 20px; margin-top: 5px; display: flex; align-items: center; }
.t-per { width: 81px; }
.inp { border: 1px solid #999; border-radius: 3px; height: 18px; background: #fff; }
.date { width: 140px; display: flex; align-items: center; padding-left: 2px; }
.cal { margin-left: auto; width: 20px; height: 16px; border-left: 1px solid #999; display: flex; align-items: center; justify-content: center; }
.car { height: 26px; margin-top: 1px; display: flex; align-items: center; }
.big { font-size: 13px; letter-spacing: 0; color: #555; }
.t-trip { width: 56px; letter-spacing: -.2px; }
.num { width: 23px; text-align: right; padding-right: 3px; line-height: 17px; margin-right: 8px; }
.t-car { width: 78px; }
.combo { width: 674px; height: 25px; border: 2px solid #e9cb57; background: #fff7d8; display: flex; padding: 3px; }
.fill { flex: 1; background: #fde4b0; line-height: 15px; }
.sel { background: #4b66b4; color: #fff; display: inline-block; height: 13px; line-height: 13px; white-space: nowrap; letter-spacing: -.8px; }
.cb { width: 19.5px; border-left: 1px solid #888; background: #fff; display: flex; align-items: center; justify-content: center; color: #666; }
h2 { margin: 0; font-weight: bold; font-size: 12px; line-height: 14px; color: #222; height: 14px; }
.h1t { margin-top: 3px; color: #000; letter-spacing: .1px; }
.h2t { margin-top: 1px; letter-spacing: .2px; }
.tools { display: flex; align-items: center; height: 20px; margin-top: 4px; padding-left: 4px; }
.tools > .i + .i, .tools > .pal { margin-left: 14px; }
.pal { position: relative; }
.bd { position: absolute; right: -1px; bottom: 0; width: 8px; height: 8px; }
.tools > .op { margin: 0 1px 0 14px; }
.t-opt { width: 64px; }
.tools > .pn { margin: 0 1px 0 19px; }

/* Tables */
.grid { width: 838px; border: 1px solid #a7a7a7; background: #fff; overflow: hidden; }
.g1 { height: 216px; margin-top: 6px; display: flex; flex-direction: column; }
.r1 { display: grid; grid-template-columns: 23px 24px 23px 23px 23px 23px 20px 210.5px 48px 90px 90px 83px 105px 1fr; }
.r2 { display: grid; grid-template-columns: 23px 24px 23px 23px 23px 128px 90px 1fr; }
.hd { height: 23px; flex: none; background: #f1f1f1; border-bottom: 1px solid #d5d5d5; color: #555; }
.hd > * { overflow: hidden; }
.hd > .i, .row > .i { justify-self: center; align-self: center; }
.hd > span { border-left: 1px solid #d3d3d3; height: 100%; padding-left: 3px; line-height: 21px; }
.hd > .hs { line-height: 18px; }
.hd > .hb { font-size: 12px; letter-spacing: 0; }
.hd > .w2 { padding-left: 2px; font-size: 11px; letter-spacing: -.55px; }
.hd > .w7 { letter-spacing: -.85px; }
.brown { color: #5a3820; }
.grey { color: #857b7b; }
.off { color: #e9e9ea; }
.on { color: #f8f287; }
.red { color: #d0201c; }
.green { color: #1f8a28; }
.hollow { color: #fff; }
.row { height: 17.67px; flex: none; border-bottom: 1px solid #e3e3e3; color: #333; }
.row.pale { background: #fcd6dd; border-bottom-color: #ead5d8; }
.row.pink { background: #fdb2be; border-bottom-color: #fdd0d7; }
.row > span { padding-left: 4px; line-height: 17px; overflow: hidden; }
.row.pale s { border-left: 1px solid rgba(255,255,255,.45); }
.row > .nm { padding-left: 23px; letter-spacing: -.5px; }
.row > .rt { text-align: right; padding-right: 4px; }
.ck { width: 13px; height: 13px; border: 1.5px solid #75695f; border-radius: 3px; justify-self: center; align-self: center; background: rgba(255,255,255,.4); }
.row u { display: block; margin: 0 0 -1px; }
.c1 { background: #fd8083; }
.c2 { background: #00fa00; }
.c3 { background: #00fbff; }
.c4 { background: #ff8400; }
.c5 { background: #fff; }
.hscroll { margin-top: auto; height: 14px; flex: none; display: flex; align-items: center; padding: 0 10px 0 9px; }
.la { border: 3px solid transparent; border-right: 4px solid #bbb; border-left: 0; }
.ra { border: 3px solid transparent; border-left: 4px solid #333; border-right: 0; margin-left: 10px; }
.track { flex: 1; height: 7px; margin-left: 9px; border-radius: 4px; background: #d4d4d4; }
.thumb { width: 532px; height: 7px; border-radius: 4px; background: #979797; }
.sum { width: 838px; height: 66px; margin-top: 6px; border: 1px solid #a7a7a7; }
.sh, .sr { display: grid; }
.s1 .sh, .s1 .sr { grid-template-columns: 75px 68px 90px 90.5px 1fr; }
.s2 .sh, .s2 .sr { grid-template-columns: 23px 75.5px 67.5px 90px 1fr; }
.sh { height: 19px; border-bottom: 1px solid #c8c8c8; color: #555; }
.sh span { border-left: 1px solid #d0d0d0; padding-left: 4px; line-height: 19px; }
.sh span:first-child { border: 0; }
.sr { height: 18.5px; border-bottom: 1px solid #e6e6e6; }
.sr span { padding-left: 4px; line-height: 18px; }
.sr .k, .sr .kk { padding-left: 3px; letter-spacing: -.9px; }
.s2 .sr + .sr { border: 0; }
.y { background: #fdf0c4; }
.k { background: #fce08b; }
.hsplit { height: 3px; margin: 2px 4px 0 0; background: repeating-linear-gradient(90deg, #dcdcdc 0 3px, transparent 3px 6px) 0 1px / 100% 1px no-repeat; }
.g2 { height: 206px; margin-top: 6px; display: flex; }
.rows { flex: 1; overflow: hidden; }
.g2 .hd { height: 19.5px; }
.g2 .hd > span { line-height: 18px; }
.g2 .row span:nth-of-type(1) { border-left: 1px solid #ccc; padding-left: 3px; }
.vscroll { width: 15px; display: flex; flex-direction: column; align-items: center; padding: 9px 0 7px; }
.ua { border: 3px solid transparent; border-bottom: 4px solid #aaa; border-top: 0; }
.da { border: 3px solid transparent; border-top: 4px solid #333; border-bottom: 0; }
.vtrack { flex: 1; width: 7px; margin: 8px 0; border-radius: 4px; background: #d4d4d4; }
.vthumb { width: 7px; height: 13px; border-radius: 4px; background: #979797; }
.t-dist { width: 56px; margin-left: 1px; letter-spacing: -.6px; }
.tools > .dc { margin-left: 19px; }
.tools > .rl { margin: 0 1px 0 14px; }
```
